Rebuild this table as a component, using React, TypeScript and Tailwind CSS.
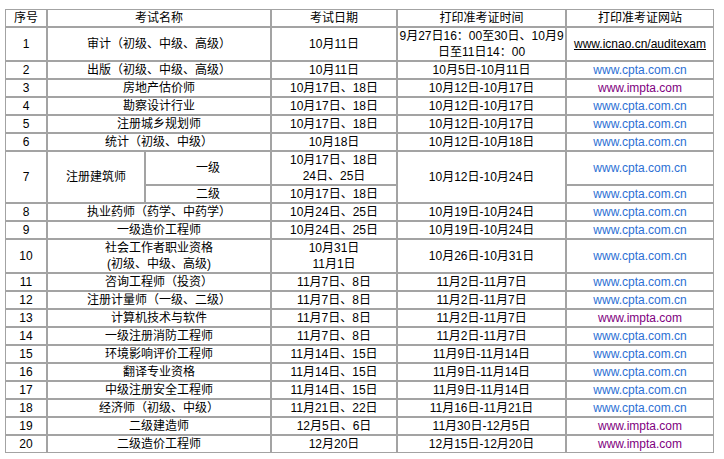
import React from "react";

type Site = "cpta" | "impta";

type Row = {
  no: string;
  name: React.ReactNode;
  date: React.ReactNode;
  print: React.ReactNode;
  site: Site;
};

const rows: Row[] = [
  { no: "2", name: "出版（初级、中级、高级）", date: "10月11日", print: "10月5日-10月11日", site: "cpta" },
  { no: "3", name: "房地产估价师", date: "10月17日、18日", print: "10月12日-10月17日", site: "impta" },
  { no: "4", name: "勘察设计行业", date: "10月17日、18日", print: "10月12日-10月17日", site: "cpta" },
  { no: "5", name: "注册城乡规划师", date: "10月17日、18日", print: "10月12日-10月17日", site: "cpta" },
  { no: "6", name: "统计（初级、中级）", date: "10月18日", print: "10月12日-10月18日", site: "cpta" },
];

const rowsAfter: Row[] = [
  { no: "8", name: "执业药师（药学、中药学）", date: "10月24日、25日", print: "10月19日-10月24日", site: "cpta" },
  { no: "9", name: "一级造价工程师", date: "10月24日、25日", print: "10月19日-10月24日", site: "cpta" },
  {
    no: "10",
    name: (
      <>
        社会工作者职业资格
        <br />
        (初级、中级、高级)
      </>
    ),
    date: (
      <>
        10月31日
        <br />
        11月1日
      </>
    ),
    print: "10月26日-10月31日",
    site: "cpta",
  },
  { no: "11", name: "咨询工程师（投资）", date: "11月7日、8日", print: "11月2日-11月7日", site: "cpta" },
  { no: "12", name: "注册计量师（一级、二级）", date: "11月7日、8日", print: "11月2日-11月7日", site: "cpta" },
  { no: "13", name: "计算机技术与软件", date: "11月7日、8日", print: "11月2日-11月7日", site: "impta" },
  { no: "14", name: "一级注册消防工程师", date: "11月7日、8日", print: "11月2日-11月7日", site: "cpta" },
  { no: "15", name: "环境影响评价工程师", date: "11月14日、15日", print: "11月9日-11月14日", site: "cpta" },
  { no: "16", name: "翻译专业资格", date: "11月14日、15日", print: "11月9日-11月14日", site: "cpta" },
  { no: "17", name: "中级注册安全工程师", date: "11月14日、15日", print: "11月9日-11月14日", site: "cpta" },
  { no: "18", name: "经济师（初级、中级）", date: "11月21日、22日", print: "11月16日-11月21日", site: "cpta" },
  { no: "19", name: "二级建造师", date: "12月5日、6日", print: "11月30日-12月5日", site: "impta" },
  { no: "20", name: "二级造价工程师", date: "12月20日", print: "12月15日-12月20日", site: "impta" },
];

const td = "border border-[#a3a3a3] p-0 text-center align-middle";

function SiteLink({ site }: { site: Site }) {
  if (site === "impta") return <span className="text-[#800080]">www.impta.com</span>;
  return <span className="text-[#2b6fd4]">www.cpta.com.cn</span>;
}

function PlainRow({ r }: { r: Row }) {
  return (
    <tr>
      <td className={td}>{r.no}</td>
      <td className={td} colSpan={2}>
        {r.name}
      </td>
      <td className={td}>{r.date}</td>
      <td className={td}>{r.print}</td>
      <td className={td}>
        <SiteLink site={r.site} />
      </td>
    </tr>
  );
}

export default function App() {
  return (
    <div className="min-h-[459px] w-[724px] bg-white pl-[5px] pt-[9px]">
      <table
        className="w-[709px] table-fixed border-separate border-spacing-0 text-[12px] leading-[16px] text-black"
        style={{ fontFamily: '"Liberation Sans", "Noto Sans CJK SC", sans-serif' }}
      >
        <colgroup>
          <col className="w-[42px]" />
          <col className="w-[98px]" />
          <col className="w-[126px]" />
          <col className="w-[126px]" />
          <col className="w-[169px]" />
          <col className="w-[148px]" />
        </colgroup>
        <tbody>
          <tr>
            <td className={td}>序号</td>
            <td className={td} colSpan={2}>
              考试名称
            </td>
            <td className={td}>考试日期</td>
            <td className={td}>打印准考证时间</td>
            <td className={td}>打印准考证网站</td>
          </tr>
          <tr>
            <td className={td}>1</td>
            <td className={td} colSpan={2}>
              审计（初级、中级、高级）
            </td>
            <td className={td}>10月11日</td>
            <td className={td}>
              9月27日16：00至30日、10月9
              <br />
              日至11日14：00
            </td>
            <td className={td}>
              <span className="underline">www.icnao.cn/auditexam</span>
            </td>
          </tr>
          {rows.map((r) => (
            <PlainRow key={r.no} r={r} />
          ))}
          <tr>
            <td className={td} rowSpan={2}>
              7
            </td>
            <td className={td} rowSpan={2}>
              注册建筑师
            </td>
            <td className={td}>一级</td>
            <td className={td}>
              10月17日、18日
              <br />
              24日、25日
            </td>
            <td className={td} rowSpan={2}>
              10月12日-10月24日
            </td>
            <td className={td}>
              <SiteLink site="cpta" />
            </td>
          </tr>
          <tr>
            <td className={td}>二级</td>
            <td className={td}>10月17日、18日</td>
            <td className={td}>
              <SiteLink site="cpta" />
            </td>
          </tr>
          {rowsAfter.map((r) => (
            <PlainRow key={r.no} r={r} />
          ))}
        </tbody>
      </table>
    </div>
  );
}
